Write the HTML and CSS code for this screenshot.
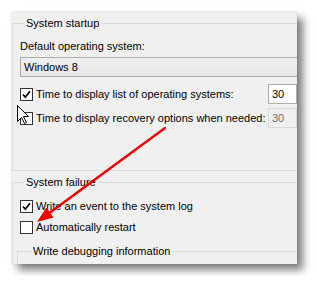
FILE: index.html
```html
<!DOCTYPE html>
<html lang="en">
  <head>
    <meta charset="UTF-8" />
    <title>Startup and Recovery</title>
    <link rel="stylesheet" href="styles.css">
  </head>
  <body>
    <div class="window">
      <fieldset class="group startup">
        <legend>System startup</legend>
        <div class="label">Default operating system:</div>
        <div class="combo">Windows 8</div>
        <div class="row">
          <span class="check"><svg viewBox="0 0 11 11"><path d="M2 5.5 L4.3 8.2 L9 2.2" /></svg></span>
          <span class="text">Time to display list of operating systems:</span>
          <span class="num">30</span>
        </div>
        <div class="row">
          <span class="check"></span>
          <span class="text">Time to display recovery options when needed:</span>
          <span class="num disabled">30</span>
        </div>
      </fieldset>

      <fieldset class="group failure">
        <legend>System failure</legend>
        <div class="row short">
          <span class="check"><svg viewBox="0 0 11 11"><path d="M2 5.5 L4.3 8.2 L9 2.2" /></svg></span>
          <span class="text">Write an event to the system log</span>
        </div>
        <div class="row short">
          <span class="check"></span>
          <span class="text">Automatically restart</span>
        </div>
        <fieldset class="group debug">
          <legend>Write debugging information</legend>
        </fieldset>
      </fieldset>
    </div>

    <!-- annotation: red arrow and mouse pointer drawn over the screenshot -->
    <svg class="overlay" width="317" height="284" viewBox="0 0 317 284">
      <line x1="165" y1="128" x2="48" y2="214" stroke="#f00000" stroke-width="2.4" stroke-linecap="round" />
      <polygon points="37,222 53.5,217.5 46.3,207.5" fill="#f00000" />
      <polygon points="17.5,105.5 17.5,121.5 21.5,117.5 24.5,123.5 26.5,122.5 23.5,116.5 28.5,116.5"
        fill="#fff" stroke="#000" stroke-width="1" stroke-linejoin="round" />
    </svg>
  </body>
</html>
```

FILE: styles.css
```css
body {
  margin: 0;
  padding: 12px;
  background: #fff;
  font-family: "Liberation Sans", Arial, sans-serif;
  font-size: 11px;
  color: #000;
}

.window {
  width: 285px;
  height: 252px;
  background: #f0f0f0;
  overflow: hidden;
  box-shadow: 6px 6px 8px rgba(0, 0, 0, 0.5), 0 0 2px rgba(0, 0, 0, 0.15);
}

.group {
  margin: 0 -20px 0 0;
  padding: 0 0 0 7px;
  border: 1px solid #dcdcdc;
}

.group legend {
  margin-left: 4px;
  padding: 0 2px;
  line-height: 14px;
}

.startup {
  margin-top: 4px;
  padding-bottom: 42px;
}

.failure {
  margin-top: 4px;
  padding-bottom: 20px;
}

.debug {
  margin: 10px -20px 0 -3px;
  height: 40px;
}

.debug legend {
  margin-left: 6px;
}

.label {
  margin-top: 9px;
  line-height: 14px;
}

.combo {
  margin-top: 4px;
  height: 18px;
  line-height: 18px;
  padding-left: 3px;
  border: 1px solid #acacac;
  background: linear-gradient(to bottom, #f0f0f0, #e5e5e5);
}

.row {
  display: flex;
  align-items: center;
  width: 277px;
  height: 20px;
  margin-top: 7px;
}

.row + .row {
  margin-top: 4px;
}

.row.short {
  height: 14px;
  margin-top: 10px;
}

.row.short + .row.short {
  margin-top: 7px;
}

.check {
  width: 11px;
  height: 11px;
  border: 1px solid #333;
  background: #fff;
  flex: none;
}

.check svg {
  display: block;
  width: 11px;
  height: 11px;
}

.check path {
  fill: none;
  stroke: #000;
  stroke-width: 1.8;
}

.text {
  margin-left: 3px;
  white-space: nowrap;
}

.num {
  margin-left: auto;
  width: 24px;
  height: 18px;
  line-height: 18px;
  padding-left: 3px;
  border: 1px solid #abadb3;
  background: #fff;
}

.num.disabled {
  border-color: #d9d9d9;
  background: #f0f0f0;
  color: #6d6d6d;
}

.overlay {
  position: absolute;
  top: 0;
  left: 0;
  pointer-events: none;
}
```
